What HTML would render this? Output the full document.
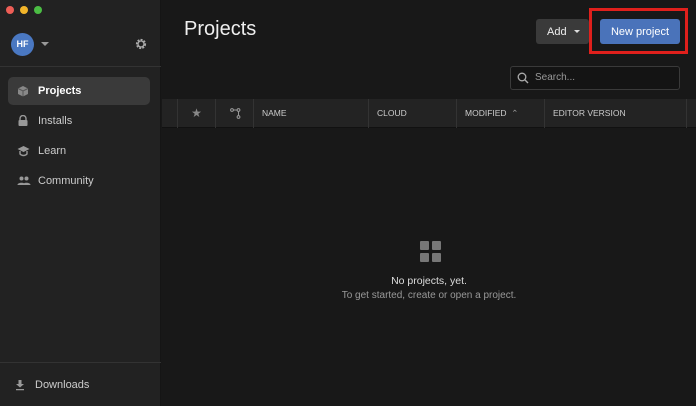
<!DOCTYPE html>
<html><head><style>
*{margin:0;padding:0;box-sizing:border-box}
body{width:696px;height:406px;overflow:hidden;background:#181818;font-family:"Liberation Sans",sans-serif;position:relative;color:#ddd}
.sb{position:absolute;left:0;top:0;width:161px;height:406px;background:#222;border-right:1px solid #151515}
.dot{position:absolute;top:6px;width:8px;height:8px;border-radius:50%}
.av{position:absolute;left:11px;top:33px;width:23px;height:23px;border-radius:50%;background:#4a78c2;color:#fff;font-size:9px;font-weight:bold;text-align:center;line-height:23px}
.nav{position:absolute;left:8px;width:142px;height:28px;font-size:11px;color:#ccc;line-height:28px;padding-left:30px}
.nav svg{position:absolute;left:9px;top:8px}
.sep{position:absolute;left:0;width:161px;height:1px;background:#333}
.hdr{position:absolute;left:162px;top:99px;width:534px;height:29px;background:#232323;border-bottom:1px solid #111}
.hdr div{position:absolute;top:0;height:29px;border-left:1px solid #333;font-size:8.5px;color:#ccc;line-height:29px;padding-left:8px}
</style></head><body>
<div class="sb">
<div class="dot" style="left:6px;background:#ee5e56"></div>
<div class="dot" style="left:20px;background:#f2b52a"></div>
<div class="dot" style="left:34px;background:#4bbd44"></div>
<div class="av">HF</div>
<div style="position:absolute;left:41px;top:42px;border:4px solid transparent;border-top:4px solid #999;border-bottom:0"></div>
<svg style="position:absolute;left:134px;top:37px" width="14" height="14" viewBox="0 0 14 14"><circle cx="7" cy="7" r="4.2" fill="none" stroke="#aaa" stroke-width="1.8" stroke-dasharray="2 1.2"/><circle cx="7" cy="7" r="3" fill="none" stroke="#aaa" stroke-width="1.3"/></svg>
<div class="sep" style="top:66px"></div>
<div class="nav" style="top:77px;background:#3a3a3a;border-radius:5px;color:#fff;font-weight:bold">
<svg width="12" height="12" viewBox="0 0 12 12"><path d="M6 1L11 3.5V9L6 11.5L1 9V3.5Z" fill="#888"/><path d="M6 6V11.5M1 3.5L6 6L11 3.5" stroke="#555" fill="none"/></svg>Projects</div>
<div class="nav" style="top:107px"><svg width="12" height="12" viewBox="0 0 12 12"><path d="M3 5V3.5a3 3 0 016 0V5" stroke="#999" stroke-width="1.4" fill="none"/><rect x="1.5" y="5" width="9" height="6" rx="1" fill="#999"/></svg>Installs</div>
<div class="nav" style="top:137px"><svg width="13" height="12" viewBox="0 0 13 12"><path d="M6.5 1L12.5 4L6.5 7L.5 4Z" fill="#999"/><path d="M3 6v3c2 2 5 2 7 0V6" stroke="#999" stroke-width="1.4" fill="none"/></svg>Learn</div>
<div class="nav" style="top:167px"><svg width="14" height="12" viewBox="0 0 14 12"><circle cx="4.5" cy="3.5" r="2" fill="#999"/><circle cx="9.5" cy="3.5" r="2" fill="#999"/><path d="M0.5 10c0-3 8-3 8 0zM5.5 10c0-3 8-3 8 0z" fill="#999"/></svg>Community</div>
<div class="sep" style="top:362px"></div>
<div class="nav" style="top:371px;left:5px"><svg width="12" height="12" viewBox="0 0 12 12"><path d="M4.5 1h3v4h2.5L6 8.5 2 5h2.5z M2 10h8v1.3H2z" fill="#999"/></svg>Downloads</div>
</div>
<div style="position:absolute;left:184px;top:18px;font-size:20px;color:#eee">Projects</div>
<div style="position:absolute;left:536px;top:19px;width:53px;height:25px;background:#3a3a3a;border-radius:3px;font-size:11px;color:#eee;line-height:26px;padding-left:11px">Add<span style="position:absolute;left:38px;top:11px;border:3.5px solid transparent;border-top:3.5px solid #ddd;border-bottom:0"></span></div>
<div style="position:absolute;left:589px;top:8px;width:99px;height:46px;border:3px solid #e0201c"></div>
<div style="position:absolute;left:600px;top:19px;width:80px;height:25px;background:#4a73ba;border-radius:3px;font-size:11px;color:#fff;text-align:center;line-height:26px">New project</div>
<div style="position:absolute;left:510px;top:66px;width:170px;height:24px;border:1px solid #3a3a3a;border-radius:3px;background:#141414;font-size:10px;color:#999;line-height:22px;padding-left:24px">Search...
<svg style="position:absolute;left:6px;top:5px" width="12" height="12" viewBox="0 0 12 12"><circle cx="5" cy="5" r="3.8" stroke="#aaa" stroke-width="1.3" fill="none"/><path d="M7.8 7.8L11 11" stroke="#aaa" stroke-width="1.4"/></svg></div>
<div class="hdr">
<div style="left:15px;width:38px;text-align:center;padding:0;color:#888;font-size:12px">★</div>
<div style="left:53px;width:38px;padding:0"><svg style="position:absolute;left:14px;top:9px" width="11" height="11" viewBox="0 0 11 11"><circle cx="2" cy="2" r="1.4" stroke="#999" fill="none"/><circle cx="8.5" cy="2" r="1.4" stroke="#999" fill="none"/><circle cx="8.5" cy="9" r="1.4" stroke="#999" fill="none"/><path d="M3.4 2H7.1M8.5 3.4V7.6" stroke="#999" fill="none"/></svg></div>
<div style="left:91px;width:115px">NAME</div>
<div style="left:206px;width:88px">CLOUD</div>
<div style="left:294px;width:88px">MODIFIED &nbsp;<span style="color:#999">⌃</span></div>
<div style="left:382px;width:142px">EDITOR VERSION</div>
<div style="left:524px;width:10px"></div>
</div>
<div style="position:absolute;left:420px;top:241px;width:9px;height:9px;background:#777;border-radius:1px"></div>
<div style="position:absolute;left:432px;top:241px;width:9px;height:9px;background:#777;border-radius:1px"></div>
<div style="position:absolute;left:420px;top:253px;width:9px;height:9px;background:#777;border-radius:1px"></div>
<div style="position:absolute;left:432px;top:253px;width:9px;height:9px;background:#777;border-radius:1px"></div>
<div style="position:absolute;left:162px;width:534px;top:275px;text-align:center;font-size:10.5px;color:#ddd">No projects, yet.</div>
<div style="position:absolute;left:162px;width:534px;top:290px;text-align:center;font-size:10px;color:#999">To get started, create or open a project.</div>
</body></html>
